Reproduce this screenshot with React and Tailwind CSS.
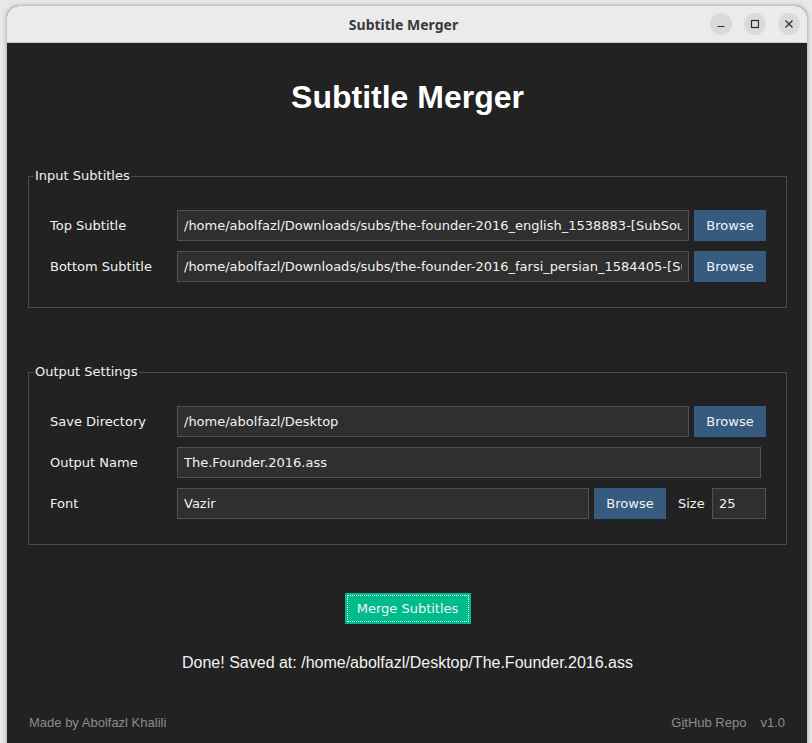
import React from "react";

const dv = "[font-family:'DejaVu_Sans',Verdana,sans-serif]";
const lib = "[font-family:'Liberation_Sans',Arial,sans-serif]";

function Entry({ value, w }) {
  return (
    <input
      readOnly
      value={value}
      className={`${w} h-[31px] shrink-0 bg-[#2f2f2f] border border-[#515151] px-[6px] text-[13px] text-[#f2f2f2] outline-none ${dv}`}
    />
  );
}

function Browse({ className = "" }) {
  return (
    <button
      className={`w-[72px] h-[31px] shrink-0 bg-[#375a7f] text-[13px] text-[#f2f2f2] ${dv} ${className}`}
    >
      Browse
    </button>
  );
}

function Label({ children }) {
  return (
    <div className={`w-[127px] shrink-0 text-[13px] leading-[16px] text-[#f2f2f2] ${dv}`}>
      {children}
    </div>
  );
}

function Group({ title, className = "", children }) {
  return (
    <fieldset className={`border border-[#4a4a4a] px-[5px] ${className}`}>
      <legend className={`px-px text-[13px] leading-[16px] text-[#f2f2f2] ${dv}`}>{title}</legend>
      <div className="pl-[16px] pt-[26px] pb-[25px] flex flex-col gap-[10px]">{children}</div>
    </fieldset>
  );
}

function WinBtn({ children }) {
  return (
    <div className="w-[22px] h-[22px] rounded-full bg-[#dadada] flex items-center justify-center">
      <svg width="22" height="22" viewBox="0 0 22 22" fill="none" stroke="#2f2f2f" strokeWidth="1.2">
        {children}
      </svg>
    </div>
  );
}

export default function App() {
  return (
    <div className="w-[812px] h-[743px] overflow-hidden bg-[#e8e8e8] pt-[6px] pl-[7px]">
      <div className="w-[800px] h-[760px] rounded-t-[12px] shadow-[0_0_5px_rgba(0,0,0,0.35)] bg-[#222222] flex flex-col overflow-hidden">
        {/* Title bar */}
        <div className="h-[37px] shrink-0 bg-[#ebebeb] border-b border-[#cdcdcd] grid grid-cols-[1fr_auto_1fr] items-center pr-[7px]">
          <div />
          <div className={`text-[14px] font-bold text-[#3a3a3a] [font-family:'Noto_Sans',sans-serif]`}>
            Subtitle Merger
          </div>
          <div className="flex justify-end gap-[12px]">
            <WinBtn>
              <line x1="7.5" y1="13.5" x2="14.5" y2="13.5" />
            </WinBtn>
            <WinBtn>
              <rect x="7.5" y="7.5" width="7" height="7" />
            </WinBtn>
            <WinBtn>
              <line x1="7.5" y1="7.5" x2="14.5" y2="14.5" />
              <line x1="14.5" y1="7.5" x2="7.5" y2="14.5" />
            </WinBtn>
          </div>
        </div>

        {/* Content */}
        <div className="pt-[34px] pl-[21px] pr-[20px] flex flex-col">
          <h1 className={`text-center text-[32px] leading-[40px] font-bold text-white ${lib}`}>
            Subtitle Merger
          </h1>

          <Group title="Input Subtitles" className="mt-[51px]">
            <div className="flex items-center h-[31px]">
              <Label>Top Subtitle</Label>
              <Entry w="w-[512px]" value="/home/abolfazl/Downloads/subs/the-founder-2016_english_1538883-[SubSource].srt" />
              <Browse className="ml-[5px]" />
            </div>
            <div className="flex items-center h-[31px]">
              <Label>Bottom Subtitle</Label>
              <Entry w="w-[512px]" value="/home/abolfazl/Downloads/subs/the-founder-2016_farsi_persian_1584405-[SubSource].srt" />
              <Browse className="ml-[5px]" />
            </div>
          </Group>

          <Group title="Output Settings" className="mt-[56px]">
            <div className="flex items-center h-[31px]">
              <Label>Save Directory</Label>
              <Entry w="w-[512px]" value="/home/abolfazl/Desktop" />
              <Browse className="ml-[5px]" />
            </div>
            <div className="flex items-center h-[31px]">
              <Label>Output Name</Label>
              <Entry w="w-[584px]" value="The.Founder.2016.ass" />
            </div>
            <div className="flex items-center h-[31px]">
              <Label>Font</Label>
              <Entry w="w-[412px]" value="Vazir" />
              <Browse className="ml-[5px]" />
              <div className={`ml-[12px] w-[34px] shrink-0 text-[13px] text-[#f2f2f2] ${dv}`}>Size</div>
              <Entry w="w-[54px]" value="25" />
            </div>
          </Group>

          <div className="mt-[48px] flex justify-center">
            <button className="w-[126px] h-[31px] bg-[#00bc8c] p-[2px]">
              <div className={`w-full h-full border border-dotted border-white flex items-center justify-center text-[13px] text-[#f2f2f2] ${dv}`}>
                Merge Subtitles
              </div>
            </button>
          </div>

          <div className={`mt-[29px] text-center text-[16px] leading-[20px] text-[#f2f2f2] ${lib}`}>
            Done! Saved at: /home/abolfazl/Desktop/The.Founder.2016.ass
          </div>

          <div className={`mt-[42px] pl-[1px] flex justify-between items-center text-[13px] leading-[16px] text-[#8c8c8c] ${lib}`}>
            <span>Made by Abolfazl Khalili</span>
            <div className="flex gap-[14px] mr-[2px]">
              <span>
                G<span className="underline">i</span>tHub Repo
              </span>
              <span>v1.0</span>
            </div>
          </div>
        </div>
      </div>
    </div>
  );
}
